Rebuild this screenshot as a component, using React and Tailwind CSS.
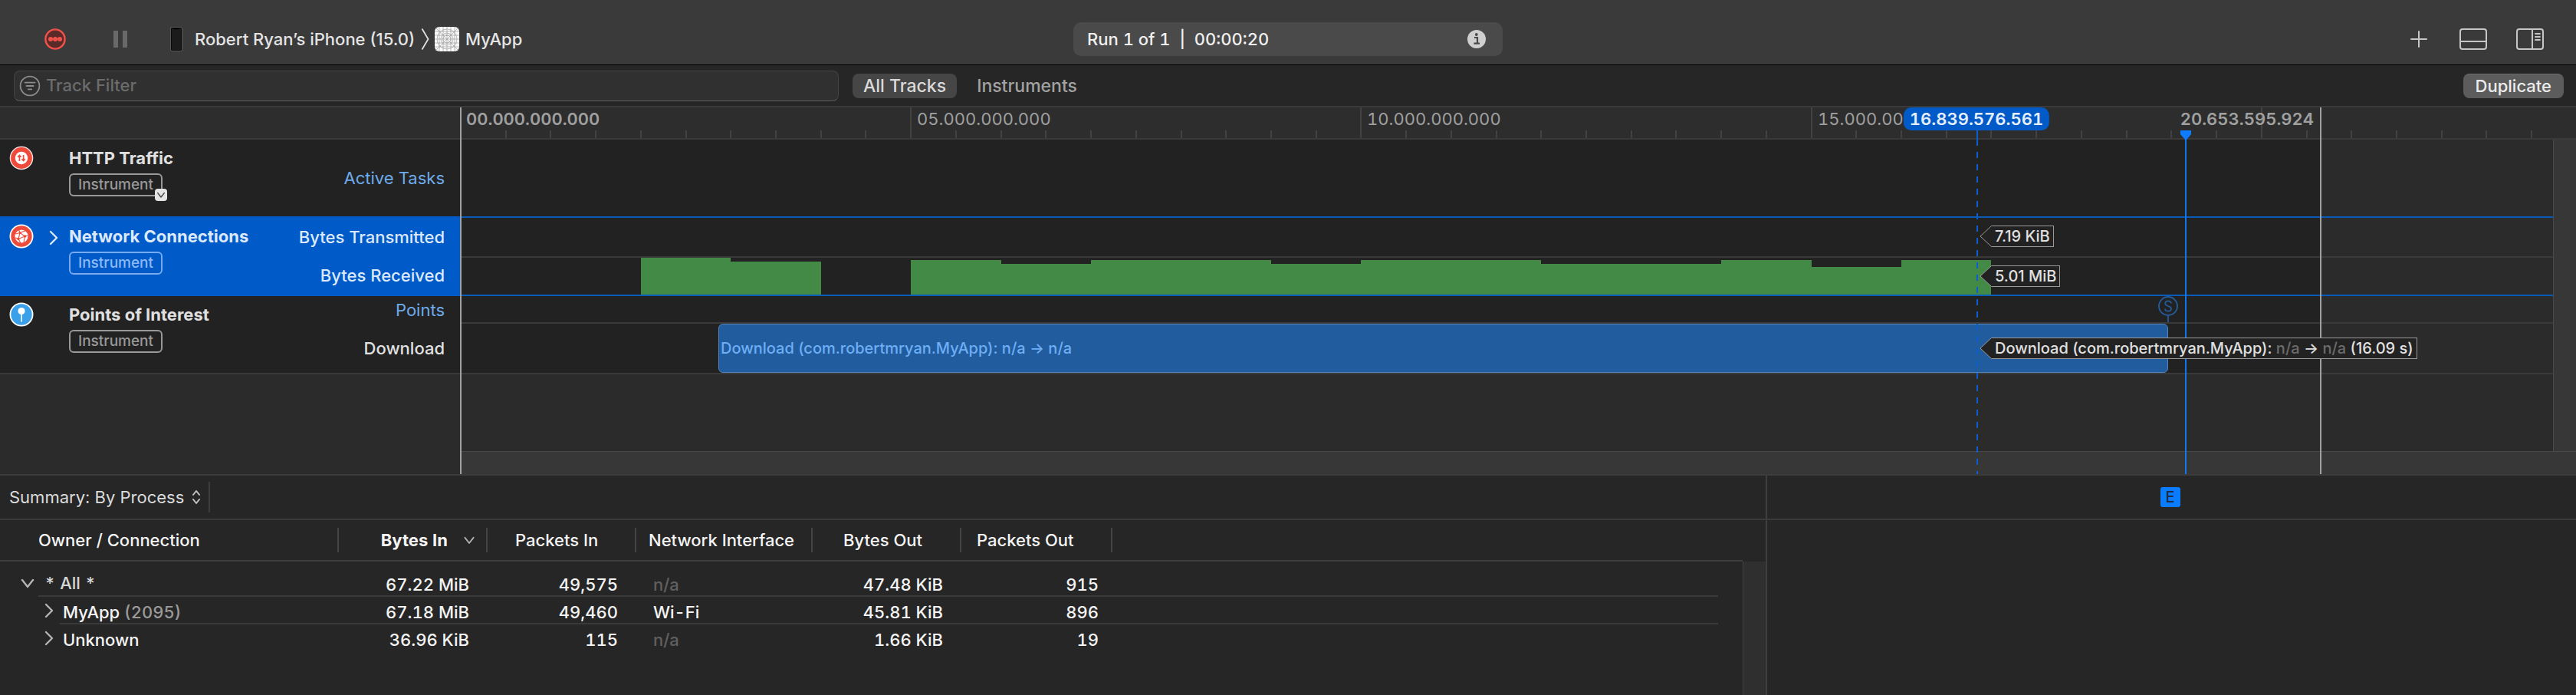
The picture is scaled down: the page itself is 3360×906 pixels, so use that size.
import { clsx } from "clsx";

const PX_PER_SECOND = 117.44;
const at = (t) => Math.round(t * PX_PER_SECOND) - 2;

const runEnd = 20.6536;
const inspection = 16.8396;
const playhead = 19.16;

const ticks = Array.from({ length: 46 }, (_, i) => i + 1);
// the 15s label is cut short where the inspection head covers it
const rulerLabels = [
  { t: 5, text: "05.000.000.000" },
  { t: 10, text: "10.000.000.000" },
  { t: 15, text: "15.000.00" },
];

const bytesReceived = [
  { from: 2, to: 3, h: 48 },
  { from: 3, to: 4, h: 43 },
  { from: 5, to: 6, h: 45 },
  { from: 6, to: 7, h: 40 },
  { from: 7, to: 9, h: 45 },
  { from: 9, to: 10, h: 40 },
  { from: 10, to: 12, h: 45 },
  { from: 12, to: 14, h: 40 },
  { from: 14, to: 15, h: 45 },
  { from: 15, to: 16, h: 36 },
  { from: 16, to: 17, h: 45 },
];

const download = { from: 2.87, to: 18.97 };

const rows = [
  { name: "* All *", level: 0, open: true, bytesIn: "67.22 MiB", packetsIn: "49,575", iface: "n/a", bytesOut: "47.48 KiB", packetsOut: "915" },
  { name: "MyApp", pid: "(2095)", level: 1, bytesIn: "67.18 MiB", packetsIn: "49,460", iface: "Wi-Fi", bytesOut: "45.81 KiB", packetsOut: "896" },
  { name: "Unknown", level: 1, bytesIn: "36.96 KiB", packetsIn: "115", iface: "n/a", bytesOut: "1.66 KiB", packetsOut: "19" },
];

function Chevron({ down, className }) {
  return (
    <svg viewBox="0 0 20 20" className={clsx("shrink-0", className)} fill="none" stroke="currentColor" strokeWidth="2.4" strokeLinecap="round" strokeLinejoin="round" aria-hidden="true">
      <path d={down ? "M3 6l7 9 7-9" : "M6 2l8 8-8 8"} />
    </svg>
  );
}

function HttpIcon() {
  return (
    <svg viewBox="0 0 32 32" className="h-8 w-8" aria-hidden="true">
      <circle cx="16" cy="16" r="14.6" fill="#f04a3a" stroke="#f6e4e2" strokeWidth="1.4" />
      <circle cx="16" cy="16" r="8.2" fill="#fff" />
      <path d="M13.4 20v-7.2M11.2 14.8l2.200-2.400 2.200 2.400M18.600 12v7.400M16.400 17.200l2.200 2.400 2.200-2.400" fill="none" stroke="#f04a3a" strokeWidth="1.7" />
    </svg>
  );
}

function NetworkIcon() {
  return (
    <svg viewBox="0 0 32 32" className="h-8 w-8" aria-hidden="true">
      <circle cx="16" cy="16" r="14.6" fill="#f04a3a" stroke="#fff" strokeWidth="1.8" />
      <circle cx="16" cy="16" r="8.6" fill="#fff" />
      <path d="M8 13l6-1.500 8-3M14 11.500l6.500 4.500 4-1M20.500 16l-1.500 8M20.500 16l-8.500 3.500-4-1.500M12 19.500l2-8M12 19.500l3 5.500M14 11.500l-1.500-4" fill="none" stroke="#f04a3a" strokeWidth="1.1" />
      <circle cx="14" cy="11.6" r="1.5" fill="#f04a3a" />
      <circle cx="20.500" cy="16" r="1.8" fill="#f04a3a" />
      <circle cx="12" cy="19.500" r="1.7" fill="#f04a3a" />
    </svg>
  );
}

function PointsIcon() {
  return (
    <svg viewBox="0 0 32 32" className="h-8 w-8" aria-hidden="true">
      <circle cx="16" cy="16" r="14.6" fill="#3ba0ea" stroke="#fff" strokeWidth="1.8" />
      <circle cx="16" cy="11.6" r="4.6" fill="#fff" />
      <path d="M16 15v10.5" stroke="#fff" strokeWidth="1.6" />
    </svg>
  );
}

function Toolbar() {
  return (
    <header className="grid h-[85px] grid-cols-[1fr_560px_1fr] items-center border-b border-black bg-[#3a3a3a] pt-[19px] pb-[1px] text-[#e4e4e4]">
      <div className="flex items-center pl-14">
        <button aria-label="Record">
          <svg viewBox="0 0 32 32" className="h-8 w-8">
            <circle cx="16" cy="16" r="12.6" fill="#5a2a28" stroke="#f0524a" strokeWidth="2.4" />
            <circle cx="10" cy="16" r="3" fill="#f0524a" />
            <circle cx="16" cy="16" r="3" fill="#f0524a" />
            <circle cx="22" cy="16" r="3" fill="#f0524a" />
          </svg>
        </button>
        <button aria-label="Pause" className="ml-[60px] flex gap-1.5">
          <span className="h-[22px] w-1.5 bg-[#696969]" />
          <span className="h-[22px] w-1.5 bg-[#696969]" />
        </button>
        <button className="ml-[56px] flex items-center text-[22px]">
          <svg viewBox="0 0 16 32" className="h-8 w-4" aria-hidden="true">
            <rect x="1" y="1" width="14" height="30" rx="2" fill="#1b1b1b" stroke="#050505" strokeWidth="1.6" />
            <rect x="0.4" y="0.4" width="15.2" height="31.2" rx="2.4" fill="none" stroke="#777" strokeWidth="0.8" />
            <path d="M4.5 1.5h7v1.6h-7z" fill="#000" />
          </svg>
          <span className="ml-4">Robert Ryan’s iPhone (15.0)</span>
        </button>
        <svg viewBox="0 0 12 28" className="ml-2 h-7 w-3" fill="none" stroke="#e0e0e0" strokeWidth="1.8" aria-hidden="true">
          <path d="M1.5 0.5l8 13.5-8 13.5" />
        </svg>
        <button className="ml-1.5 flex items-center text-[22px]">
          <svg viewBox="0 0 32 32" className="h-8 w-8" aria-hidden="true">
            <rect width="32" height="32" rx="6" fill="#fafafa" />
            <g fill="none" stroke="#9c9c9c" strokeWidth="0.7">
              <path d="M0 6h32M0 11h32M0 16h32M0 21h32M0 26h32M6 0v32M11 0v32M16 0v32M21 0v32M26 0v32M1 1l30 30M31 1L1 31" />
              <circle cx="16" cy="16" r="5" />
              <circle cx="16" cy="16" r="8" />
              <circle cx="16" cy="16" r="13" />
            </g>
          </svg>
          <span className="ml-2">MyApp</span>
        </button>
      </div>
      <div className="flex h-11 items-center justify-between rounded-[10px] bg-[#4a4a4a] pr-[22px] pl-[18px] text-[22px] text-[#f0f0f0] tabular-nums">
        <span>Run 1 of 1&nbsp; |&nbsp; 00:00:20</span>
        <button aria-label="Run info">
          <svg viewBox="0 0 24 24" className="h-6 w-6">
            <circle cx="12" cy="12" r="12" fill="#cfcfcf" />
            <circle cx="11.8" cy="6" r="1.9" fill="#4a4a4a" />
            <path d="M9 10h4v7.4M8.4 17.6h7.6" fill="none" stroke="#4a4a4a" strokeWidth="2.2" />
          </svg>
        </button>
      </div>
      <div className="flex items-center justify-end pr-[42px] text-[#c6c6c6]">
        <button aria-label="Add instrument">
          <svg viewBox="0 0 22 22" className="h-[22px] w-[22px]" stroke="currentColor" strokeWidth="2" strokeLinecap="round">
            <path d="M11 1v20M1 11h20" />
          </svg>
        </button>
        <button aria-label="Toggle detail area" className="ml-[42px]">
          <svg viewBox="0 0 36 28" className="h-7 w-9" fill="none" stroke="currentColor" strokeWidth="2">
            <rect x="1" y="1" width="34" height="26" rx="3" />
            <path d="M1 17h34" />
          </svg>
        </button>
        <button aria-label="Toggle inspector" className="ml-[38px]">
          <svg viewBox="0 0 36 28" className="h-7 w-9" fill="none" stroke="currentColor" strokeWidth="2">
            <rect x="1" y="1" width="34" height="26" rx="3" />
            <path d="M21 1v26" />
            <path d="M25 7h6M25 11h6M25 15h6" strokeWidth="1.8" strokeLinecap="round" />
          </svg>
        </button>
      </div>
    </header>
  );
}

function FilterBar() {
  return (
    <div className="flex h-[55px] items-center border-b-2 border-[#3a3a3a] bg-[#262626] pr-4 pl-[18px]">
      <label className="flex h-10 w-[1076px] items-center rounded-lg border border-[#444] border-b-[#5c5c5c] bg-[#303030] pl-1.5">
        <svg viewBox="0 0 28 28" className="h-7 w-7" fill="none" stroke="#8c8c8c" strokeWidth="1.8" strokeLinecap="round" aria-hidden="true">
          <circle cx="14" cy="14" r="12.4" />
          <path d="M7.5 9.6h13M9.5 14h9M11.8 18.4h4.4" />
        </svg>
        <input type="text" aria-label="Track Filter" placeholder="Track Filter" className="ml-[7px] flex-1 bg-transparent text-[22px] outline-none placeholder:text-[#6c6c6c]" />
      </label>
      <button className="ml-[18px] h-8 rounded-lg bg-[#464646] px-3.5 text-[23px] leading-8 text-[#dadada]">All Tracks</button>
      <button className="ml-[26px] text-[23px] leading-8 text-[#a2a2a2]">Instruments</button>
      <button className="ml-auto h-8 rounded-lg border-t border-[#6c6c6c] bg-[#5c5c5c] px-4 text-[22px] leading-[30px] text-[#ececec]">Duplicate</button>
    </div>
  );
}

function Badge({ selected, menu }) {
  return (
    <span className={clsx("relative flex h-[30px] w-[122px] items-center justify-center rounded-md border-2 text-[19px]", selected ? "border-[#78aaf0] text-[#8ebaf6]" : "border-[#999] text-[#999]")}>
      Instrument
      {menu && (
        <button aria-label="Instrument menu" className="absolute -right-2 -bottom-2 flex h-4 w-4 items-center justify-center rounded bg-[#e4e4e4] text-[#444]">
          <Chevron down className="h-3 w-3" />
        </button>
      )}
    </span>
  );
}

function TrackHeader({ icon, title, selected, menu, children }) {
  return (
    <div className={clsx("flex", selected ? "h-[104px] bg-[#005ac8] py-0.5 text-[#dce9fb]" : "h-[100px] bg-[#222] text-[#e0e0e0]")}>
      <div className="w-14 pt-2 pl-3">{icon}</div>
      <div className="w-[34px] pt-4 pl-1">{selected && <Chevron className="h-5 w-5 text-[#dce9fb]" />}</div>
      <div className="flex-1 pt-2">
        <h2 className="mb-1 text-[22px] leading-8 font-bold whitespace-nowrap">{title}</h2>
        <Badge selected={selected} menu={menu} />
      </div>
      <div className="flex flex-col pr-5 text-right text-[22px]">{children}</div>
    </div>
  );
}

function Sidebar() {
  return (
    <aside className="flex w-[600px] shrink-0 flex-col bg-[#2b2b2b]">
      <div className="h-[42px] border-b-2 border-[#3a3a3a] bg-[#2d2d2d]" />
      <TrackHeader icon={<HttpIcon />} title="HTTP Traffic" menu>
        <span className="leading-[100px] font-normal text-[#6fabea]">Active Tasks</span>
      </TrackHeader>
      <TrackHeader icon={<NetworkIcon />} title="Network Connections" selected>
        <span className="leading-[50px]">Bytes Transmitted</span>
        <span className="leading-[50px]">Bytes Received</span>
      </TrackHeader>
      <TrackHeader icon={<PointsIcon />} title="Points of Interest">
        <span className="leading-[36px] font-normal text-[#6fabea]">Points</span>
        <span className="leading-[64px]">Download</span>
      </TrackHeader>
      <div className="flex-1 border-t-2 border-[#3a3a3a]" />
    </aside>
  );
}

function Callout({ className, children }) {
  return (
    <div className={clsx("absolute z-20 flex h-7 items-center text-[20px] whitespace-nowrap text-[#e0e0e0]", className)} style={{ left: at(inspection) + 4 }}>
      <svg viewBox="0 0 16 28" className="h-7 w-4 shrink-0" aria-hidden="true">
        <path d="M16 0.5h-0.5L1 14l14.5 13.5h0.5" fill="#222" stroke="#9a9a9a" />
      </svg>
      <span className="h-7 border-y border-r border-[#9a9a9a] bg-[#222] pr-1 pl-1 leading-[26px]">{children}</span>
    </div>
  );
}

function Ruler() {
  return (
    <div className="relative h-[42px] overflow-hidden border-b-2 border-[#3a3a3a] bg-[#2d2d2d] text-[22px] leading-[30px] text-[#a0a0a0] tabular-nums">
      {ticks.map((i) => (
        <span key={i} className={clsx("absolute bottom-0 w-0.5 bg-[#424242]", i % 10 === 0 ? "h-10" : "h-2.5")} style={{ left: at(i / 2) }} />
      ))}
      <span className="absolute top-0 left-1.5 font-semibold">00.000.000.000</span>
      {rulerLabels.map((label) => (
        <span key={label.t} className="absolute top-0 font-normal" style={{ left: at(label.t) + 9 }}>{label.text}</span>
      ))}
      <span className="absolute top-0 -translate-x-full pr-2 font-semibold" style={{ left: at(runEnd) }}>20.653.595.924</span>
      <span className="absolute top-0 z-10 -translate-x-1/2 rounded-[10px] bg-[#005ac8] px-2 font-semibold text-[#e6effc]" style={{ left: at(inspection) }}>16.839.576.561</span>
    </div>
  );
}

function Timeline() {
  return (
    <section className="relative flex-1 overflow-hidden border-l-2 border-[#a0a0a0] bg-[#2b2b2b]">
      <Ruler />
      <div className="relative">
        <div className="absolute top-0 left-0 h-[304px] bg-[#222]" style={{ width: at(runEnd) }} />
        <div className="relative h-[100px]" />
        <div className="relative h-[104px] border-y-2 border-[#0a5ab8]">
          <div className="h-[52px] border-b-2 border-[#3a3a3a]" />
          <div className="relative h-12">
            {bytesReceived.map((bar) => (
              <div key={bar.from} className="absolute bottom-0 bg-[#428a46]" style={{ left: at(bar.from) + 1, width: at(bar.to) - at(bar.from), height: bar.h }} />
            ))}
          </div>
        </div>
        <div className="relative h-9 border-b-2 border-[#3a3a3a]">
          <svg viewBox="0 0 26 34" className="absolute top-0 h-[34px] w-[26px]" style={{ left: at(download.to) - 13 }} fill="none" stroke="#245c9c" strokeWidth="1.8" aria-hidden="true">
            <circle cx="13" cy="13" r="12" />
            <path d="M13 25v9" />
            <path d="M17 9.400C17 7.400 15.200 6.400 13 6.400S9.200 7.600 9.200 9.600c0 4.400 7.800 2.400 7.800 6.800 0 2-1.800 3.200-4 3.200s-4-1.200-4-3.200" />
          </svg>
        </div>
        <div className="relative h-[66px] border-b-2 border-[#3a3a3a]">
          <div className="absolute top-0 h-16 rounded-md border border-[#5585b8] bg-[#205c9e] pl-0.5 text-[20px] leading-[62px] text-[#6eaef5]" style={{ left: at(download.from), width: at(download.to) - at(download.from) }}>
            Download (com.robertmryan.MyApp): n/a → n/a
          </div>
        </div>
        <div className="h-[100px]" />
        <div className="h-[30px] border-t border-[#4a4a4a] bg-[#373737]" />
        <div className="absolute top-0 right-0 h-[406px] w-[30px] border-l border-[#4a4a4a] bg-[#373737]" />

        <Callout className="top-[112px]">7.19 KiB</Callout>
        <Callout className="top-[164px]">5.01 MiB</Callout>
        <Callout className="top-[258px]">
          Download (com.robertmryan.MyApp): <span className="text-[#6b6b6b]">n/a</span> → <span className="text-[#6b6b6b]">n/a</span> (16.09 s)
        </Callout>
      </div>
      <div className="absolute top-[30px] z-10 h-3 w-0.5 bg-[#0a5fcc]" style={{ left: at(inspection) }} />
      <div className="absolute top-[42px] bottom-0 z-10 w-0.5 bg-[repeating-linear-gradient(to_bottom,#0a5fcc_0_8px,transparent_8px_16px)]" style={{ left: at(inspection) }} />
      <div className="absolute top-[30px] bottom-0 z-10 w-0.5 bg-[#0f78f0]" style={{ left: at(playhead) }} />
      <svg viewBox="0 0 14 12" className="absolute top-[30px] z-10 h-3 w-3.5" style={{ left: at(playhead) - 6 }} fill="#0f7cff" aria-hidden="true">
        <path d="M0 0h14v5l-6 7H6L0 5z" />
      </svg>
      <div className="absolute inset-y-0 w-0.5 bg-[#a0a0a0]" style={{ left: at(runEnd) }} />
    </section>
  );
}

function HeaderCell({ className, children }) {
  return (
    <th className="border-b-2 border-[#3e3e3e] p-0 font-medium">
      <div className={clsx("my-2.5 flex h-8 items-center border-r-2 border-[#444]", className)}>{children}</div>
    </th>
  );
}

function Cell({ last, className, children }) {
  return (
    <td className="p-0">
      <div className={clsx("h-9 border-b-2 leading-10", last ? "border-transparent" : "border-[#3a3a3a]", className)}>{children}</div>
    </td>
  );
}

function SummaryTable() {
  return (
    <table className="w-full table-fixed border-separate border-spacing-0 text-[22px] text-[#f4f4f4] tabular-nums">
      <colgroup>
        <col className="w-[442px]" />
        <col className="w-[194px]" />
        <col className="w-[194px]" />
        <col className="w-[230px]" />
        <col className="w-[194px]" />
        <col className="w-[197px]" />
        <col />
      </colgroup>
      <thead>
        <tr>
          <HeaderCell className="pl-[50px]">Owner / Connection</HeaderCell>
          <HeaderCell className="justify-end pr-3.5">
            <span className="font-bold">Bytes In</span>
            <Chevron down className="ml-5 h-4 w-4 text-[#b0b0b0]" />
          </HeaderCell>
          <HeaderCell className="pl-9">Packets In</HeaderCell>
          <HeaderCell className="pl-4">Network Interface</HeaderCell>
          <HeaderCell className="pl-10">Bytes Out</HeaderCell>
          <HeaderCell className="pl-5">Packets Out</HeaderCell>
          <th className="border-b-2 border-[#3e3e3e] p-0" />
        </tr>
      </thead>
      <tbody>
        <tr><td colSpan={7} className="h-2.5 p-0" /></tr>
        {rows.map((row, i) => {
          const last = i === rows.length - 1;
          return (
            <tr key={row.name}>
              <td className="p-0">
                <div className={clsx("flex", row.level === 0 ? "pl-[26px]" : "pl-[54px]")}>
                  <button aria-label={`Toggle ${row.name}`} className="h-9 w-6 text-[#b4b4b4]">
                    <Chevron down={row.open} className="h-5 w-5" />
                  </button>
                  <div className={clsx("h-9 flex-1 border-b-2", last ? "border-transparent" : "border-[#3a3a3a]", row.level === 0 ? "pl-2 leading-9 text-[#d6d6d6]" : "pl-1 leading-10")}>
                    {row.name} {row.pid && <span className="text-[#9a9a9a]">{row.pid}</span>}
                  </div>
                </div>
              </td>
              <Cell last={last} className="pr-6 text-right">{row.bytesIn}</Cell>
              <Cell last={last} className="pr-6 text-right">{row.packetsIn}</Cell>
              <Cell last={last} className={clsx("pl-[22px]", row.iface === "n/a" && "text-[#606060]")}>{row.iface}</Cell>
              <Cell last={last} className="pr-6 text-right">{row.bytesOut}</Cell>
              <Cell last={last} className="pr-[18px] text-right">{row.packetsOut}</Cell>
              <Cell last={last} className="mr-8" />
            </tr>
          );
        })}
      </tbody>
    </table>
  );
}

function DetailArea() {
  return (
    <div className="flex flex-1 border-t-2 border-[#3c3c3c] bg-[#262626]">
      <div className="flex flex-1 flex-col">
        <div className="flex h-[58px] items-center border-b-2 border-[#3a3a3a]">
          <button className="flex h-10 items-center border-r-2 border-[#3e3e3e] pr-2.5 pl-3 text-[22px] font-normal text-[#dcdcdc]">
            Summary: By Process
            <svg viewBox="0 0 12 20" className="ml-2.5 h-5 w-3" fill="none" stroke="#c4c4c4" strokeWidth="2" strokeLinecap="round" strokeLinejoin="round" aria-hidden="true">
              <path d="M2 7l4-5 4 5M2 13l4 5 4-5" />
            </svg>
          </button>
        </div>
        <div className="flex flex-1">
          <div className="flex-1">
            <SummaryTable />
          </div>
          <div className="mt-[54px] w-[30px] border-l border-[#444] bg-[#2f2f2f]" />
        </div>
      </div>
      <div className="w-[1057px] border-l-2 border-[#3e3e3e]">
        <div className="flex h-[58px] items-center justify-center border-b-2 border-[#3a3a3a] pr-1">
          <button aria-label="Extended detail" className="h-[26px] w-[26px] rounded-[3px] bg-[#0a7cff] text-[20px] leading-[26px] text-[#1c2c44]">E</button>
        </div>
      </div>
    </div>
  );
}

export default function App() {
  return (
    <div className="flex min-h-screen flex-col bg-[#262626] font-['Inter','Liberation_Sans',sans-serif] font-medium">
      <Toolbar />
      <FilterBar />
      <main className="flex flex-1 flex-col">
        <div className="flex">
          <Sidebar />
          <Timeline />
        </div>
        <DetailArea />
      </main>
    </div>
  );
}
